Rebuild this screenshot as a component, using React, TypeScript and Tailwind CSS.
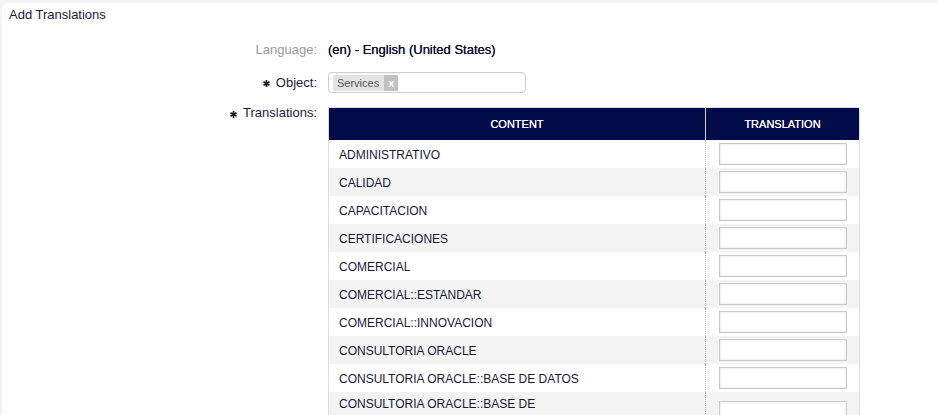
import React from "react";

const rows = [
  "ADMINISTRATIVO",
  "CALIDAD",
  "CAPACITACION",
  "CERTIFICACIONES",
  "COMERCIAL",
  "COMERCIAL::ESTANDAR",
  "COMERCIAL::INNOVACION",
  "CONSULTORIA ORACLE",
  "CONSULTORIA ORACLE::BASE DE DATOS",
  "CONSULTORIA ORACLE::BASE DE DATOS::ADMINISTRACION::SOPORTE",
  "CONSULTORIA ORACLE::DESARROLLO",
];

function Star() {
  return (
    <svg width="7" height="7" viewBox="0 0 8 8" className="shrink-0">
      <g stroke="#1a1a30" strokeWidth="2" strokeLinecap="round">
        <line x1="4" y1="0.8" x2="4" y2="7.2" />
        <line x1="1.2" y1="2.4" x2="6.8" y2="5.6" />
        <line x1="1.2" y1="5.6" x2="6.8" y2="2.4" />
      </g>
    </svg>
  );
}

export default function App() {
  return (
    <div className="w-[938px] h-[415px] overflow-hidden bg-[#f3f3f5] pl-[2px] pt-[3px] font-['Liberation_Sans',Arial,sans-serif] text-[#1a1a3c]">
      <div className="bg-white rounded-tl-[6px] h-[600px]">
        <div className="pl-[7px] pt-[4px] text-[13px] leading-[16px]">Add Translations</div>

        <div className="mt-[17px] grid grid-cols-[315px_1fr] gap-x-[11px] text-[13px]">
          <div className="text-right leading-[20px] text-[#999]">Language:</div>
          <div className="leading-[20px] text-[#0c0c34] [text-shadow:0_0_0.5px_#0c0c34]">(en) - English (United States)</div>

          <div className="mt-[12px] flex items-center justify-end gap-[6px] leading-[21px]">
            <span className="mt-[2px]"><Star /></span>
            <span>Object:</span>
          </div>
          <div className="mt-[12px]">
            <div className="w-[198px] h-[21px] border border-[#cfcfcf] rounded-[4px] shadow-[inset_0_1px_1px_rgba(0,0,0,0.05)] flex items-center pl-[4px]">
              <div className="flex h-[16px] items-stretch text-[11px] leading-[16px]">
                <span className="bg-[#e3e3e3] text-[#555] pl-[4px] pr-[5px]">Services</span>
                <span className="bg-[#c2c2c2] text-white w-[14px] text-center font-bold">x</span>
              </div>
            </div>
          </div>

          <div className="mt-[12px] flex items-start justify-end gap-[6px] leading-[16px]">
            <span className="mt-[6px]"><Star /></span>
            <span>Translations:</span>
          </div>
          <div className="mt-[14px]">
            <div className="w-[532px] border-x border-t border-[#dcdcdc]">
              <div className="flex h-[32px] bg-[#020a48] text-white text-[11px] [text-shadow:0_0_0.6px_#ffffff]">
                <div className="w-[377px] border-r border-[#d0d0d8] flex items-center justify-center">CONTENT</div>
                <div className="flex-1 flex items-center justify-center">TRANSLATION</div>
              </div>
              {rows.map((r, i) => (
                <div key={r} className={`flex ${i % 2 === 1 ? "bg-[#f3f3f3]" : "bg-white"}`}>
                  <div className="w-[377px] border-r border-dotted border-[#bdbdbd] pl-[10px] pr-[10px] pt-[3px] pb-[1px] leading-[18px] text-[12px] text-[#17173a] flex items-center">
                    {r}
                  </div>
                  <div className="flex-1 flex items-center justify-center py-[3px]">
                    <div className="w-[128px] h-[22px] bg-white border border-[#c9c9c9] shadow-[inset_0_0_3px_rgba(0,0,0,0.12)]" />
                  </div>
                </div>
              ))}
            </div>
          </div>
        </div>
      </div>
    </div>
  );
}
